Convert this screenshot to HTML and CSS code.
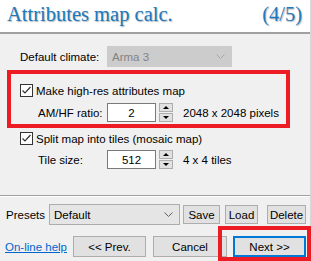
FILE: index.html
```html
<!DOCTYPE html>
<html>
<head>
<meta charset="utf-8">
<link rel="stylesheet" href="styles.css">
</head>
<body>
<div class="win">
  <div class="header">
    <span class="title">Attributes map calc.</span>
    <span class="title">(4/5)</span>
  </div>
  <div class="main">
    <div class="row climate">
      <span class="lbl">Default climate:</span>
      <div class="combo disabled"><span>Arma 3</span><svg class="chev" width="9" height="6" viewBox="0 0 9 6"><path d="M0.5 0.5 L4.5 4.5 L8.5 0.5" fill="none" stroke="currentColor" stroke-width="1"/></svg></div>
    </div>
    <div class="redbox">
      <div class="check"><span class="cb"><svg width="11" height="11" viewBox="0 0 11 11"><path d="M1.5 5.5 L4 8 L9.5 2" fill="none" stroke="#333" stroke-width="1.2"/></svg></span><span>Make high-res attributes map</span></div>
      <div class="row sub">
        <span class="lbl2">AM/HF ratio:</span>
        <div class="num">2</div>
        <div class="spin"><span class="up"></span><span class="dn"></span></div>
        <span class="info">2048 x 2048 pixels</span>
      </div>
    </div>
    <div class="check second"><span class="cb"><svg width="11" height="11" viewBox="0 0 11 11"><path d="M1.5 5.5 L4 8 L9.5 2" fill="none" stroke="#333" stroke-width="1.2"/></svg></span><span>Split map into tiles (mosaic map)</span></div>
    <div class="row sub tiles">
      <span class="lbl2">Tile size:</span>
      <div class="num">512</div>
      <div class="spin"><span class="up"></span><span class="dn"></span></div>
      <span class="info">4 x 4 tiles</span>
    </div>
  </div>
  <div class="footer">
    <div class="presets">
      <span class="plbl">Presets</span>
      <div class="combo pcombo"><span>Default</span><svg class="chev" width="9" height="6" viewBox="0 0 9 6"><path d="M0.5 0.5 L4.5 4.5 L8.5 0.5" fill="none" stroke="currentColor" stroke-width="1"/></svg></div>
      <button class="btn save">Save</button>
      <button class="btn load">Load</button>
      <button class="btn del">Delete</button>
    </div>
    <div class="nav">
      <a class="help" href="#">On-line help</a>
      <button class="btn big prev">&lt;&lt; Prev.</button>
      <button class="btn big cancel">Cancel</button>
      <button class="btn big next">Next &gt;&gt;</button>
      <div class="mark"></div>
    </div>
  </div>
</div>
</body>
</html>
```
FILE: styles.css
```css
* { box-sizing: border-box; }
html, body { margin: 0; padding: 0; }
body {
  width: 311px; height: 261px; overflow: hidden;
  background: #f0f0f0;
  font-family: "Liberation Sans", Arial, sans-serif;
  font-size: 11.5px; color: #000;
}
.win { position: relative; width: 311px; height: 261px; border-right: 1px solid #d8d8d8; }
.header {
  height: 34px; background: #fff;
  display: flex; justify-content: space-between; align-items: flex-start;
  padding: 3px 8px 0 7px;
  border-bottom: 2px solid #a0a0a0;
}
.title {
  font-family: "Liberation Serif", "Times New Roman", serif;
  font-size: 20.5px; color: #2179bd;
  text-shadow: 1px 1px 1px #b8b8b8;
}
.main { height: 162px; padding-top: 12px; border-bottom: 1px solid #a0a0a0; box-shadow: 0 1px 0 #fff; }
.row { display: flex; align-items: center; }
.climate { height: 21px; padding-left: 20px; }
.lbl { width: 87px; }
.combo {
  position: relative; height: 21px; display: flex; align-items: center;
  padding-left: 4px; border: 1px solid #cccccc;
}
.combo .chev { position: absolute; right: 6px; top: 7px; }
.disabled { width: 125px; background: #cccccc; color: #838383; }
.disabled .chev { color: #a8a8a8; }
.redbox {
  margin: 3px 0 0 7px; width: 283px; height: 58px;
  border: 4px solid #ed1c24; padding: 10px 0 0 9px;
}
.check { display: flex; align-items: center; height: 13px; }
.cb {
  width: 13px; height: 13px; border: 1px solid #333; background: #fff;
  margin-right: 3px; display: flex; align-items: center; justify-content: center;
}
.second { margin: 4px 0 0 20px; }
.sub { height: 19px; margin-top: 6px; }
.redbox .sub { padding-left: 18px; }
.lbl2 { width: 69px; }
.num {
  width: 49px; height: 19px; background: #fff; border: 1px solid #7a7a7a;
  display: flex; align-items: center; justify-content: center;
}
.spin { display: flex; flex-direction: column; margin-left: 3px; height: 19px; }
.spin span {
  width: 14px; height: 9px; background: #e1e1e1; border: 1px solid #adadad;
  position: relative;
}
.spin .dn { margin-top: 1px; }
.spin span::after {
  content: ""; position: absolute; left: 3px; top: 2px;
  border-left: 3px solid transparent; border-right: 3px solid transparent;
}
.spin .up::after { border-bottom: 3px solid #000; }
.spin .dn::after { border-top: 3px solid #000; top: 2px; }
.info { margin-left: 10px; }
.tiles { margin-top: 5px; padding-left: 38px; }
.footer { padding-top: 8px; }
.presets { display: flex; align-items: center; height: 21px; padding-left: 6px; }
.plbl { width: 43px; }
.pcombo { width: 131px; background: #e5e5e5; border-color: #adadad; color: #000; }
.pcombo .chev { color: #606060; }
.btn {
  font-family: "Liberation Sans", Arial, sans-serif; font-size: 11.5px; color: #000;
  background: #e1e1e1; border: 1px solid #adadad; padding: 0; margin: 0;
  height: 19px;
}
.save { width: 37px; margin-left: 3px; }
.load { width: 33px; margin-left: 5px; }
.del { width: 39px; margin-left: 9px; }
.nav { display: flex; align-items: center; height: 21px; margin-top: 11px; padding-left: 5px; }
.help { color: #0066cc; text-decoration: underline; width: 68px; }
.big { height: 21px; width: 73px; }
.cancel { margin-left: 7px; width: 74px; }
.next { margin-left: 6px; border: 2px solid #0078d7; }
.mark {
  position: absolute; left: 218px; top: 226px; width: 93px; height: 35px;
  border: 4px solid #ed1c24;
}
```
